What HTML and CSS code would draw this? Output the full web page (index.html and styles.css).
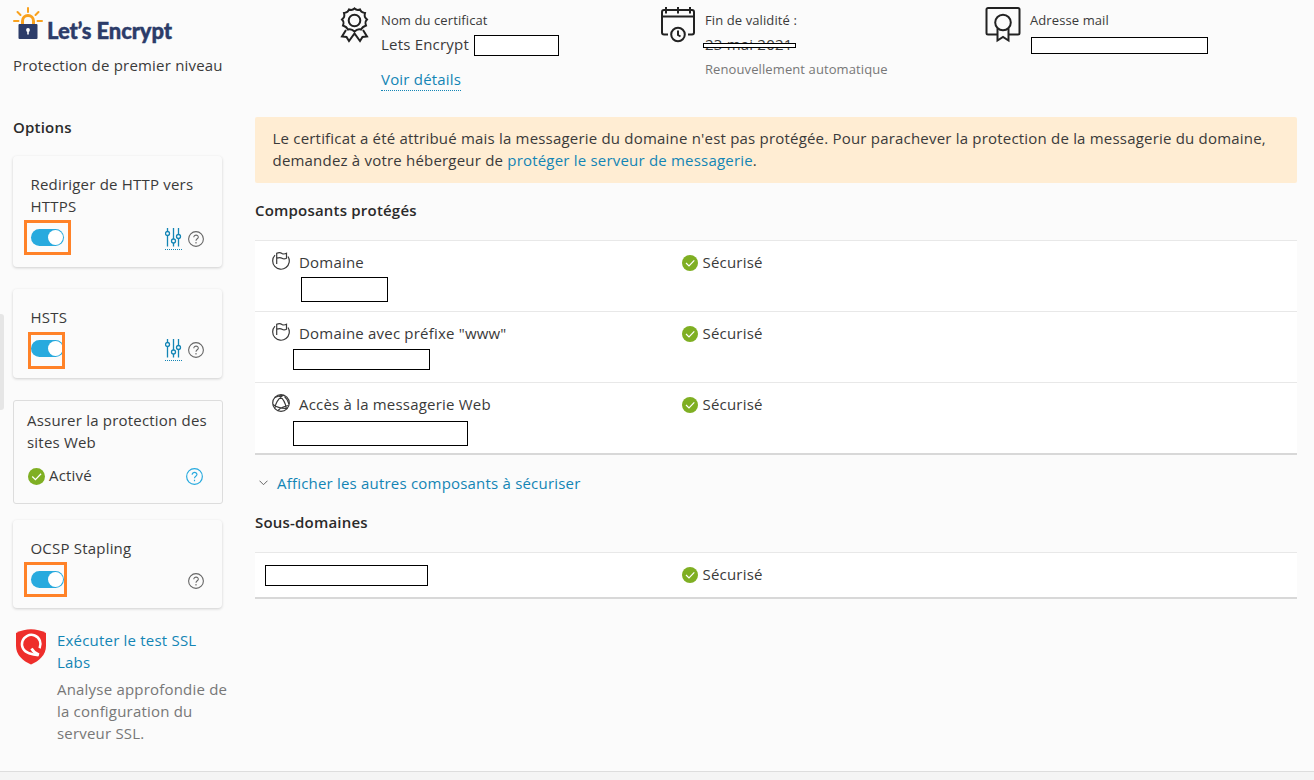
FILE: index.html
```
<!DOCTYPE html>
<html lang="fr">
<head>
<meta charset="utf-8">
<title>Certificat SSL/TLS</title>
<link rel="stylesheet" href="styles.css">
</head>
<body>
<svg class="defs" aria-hidden="true">
  <symbol id="check" viewBox="0 0 16 16"><circle cx="8" cy="8" r="8" fill="#7faf23"/><path d="M4 8l3 3 5.3-5.6" fill="none" stroke="#fff" stroke-width="1.2"/></symbol>
  <symbol id="help" viewBox="0 0 16 16"><circle cx="8" cy="8" r="7.4" fill="none" stroke="currentColor" stroke-width="1.1"/><path d="M5.8 6.3C5.8 3.3 10.4 3.5 10.3 6.2C10.3 7.8 8 7.8 8 9.7M8 11.1v1.3" fill="none" stroke="currentColor" stroke-width="1.1"/></symbol>
  <symbol id="sliders" viewBox="0 0 17 20"><path d="M2.500 0v3.500M2.500 7.500v11M8.500 0v11M8.500 15v3.500M13.500 0v6.500M13.500 10.500v8" stroke="currentColor" stroke-width="1.300"/><g fill="none" stroke="currentColor" stroke-width="1.300"><circle cx="2.500" cy="5.500" r="2"/><circle cx="8.500" cy="13" r="2"/><circle cx="13.500" cy="8.500" r="2"/></g></symbol>
  <symbol id="flag" viewBox="0 0 18 18"><path d="M3 3.200A8.300 8.300 0 1 0 16 4.500M4.700 12V1.200C7 .3 8.700 .5 10 1.500C11.500 2.500 13 2 14.500 1.300V6.200C13 7 11.500 7.200 10 6.200C8.500 5.200 7 5.300 4.700 6.200" fill="none" stroke="currentColor" stroke-width="1.200"/></symbol>
  <symbol id="web" viewBox="0 0 18 18"><g fill="none" stroke="currentColor" stroke-width="1.200"><circle cx="9" cy="9" r="8.300"/><path d="M2.800 3.500Q7 1.300 12 1.300M7 2Q13 5.500 14.500 15M10.500 1.800Q4 6.500 2.800 14.300M1 10.500Q7 15 15.500 14.300M12.500 2.500Q15.500 5 17 10M16.500 11.500Q10 12.500 6 16.500"/></g></symbol>
</svg>

<div class="handle"></div>
<div class="page">
  <header class="top">
    <div class="brand">
      <svg class="logo" width="162" height="40" viewBox="0 0 162 40">
        <path d="M9.500 18v-3a5.500 5.500 0 0 1 11 0v3" fill="none" stroke="#f9a11d" stroke-width="3"/>
        <path d="M15 2v4M4.500 6l3 3M25.500 6L22.500 9M1 15h4.500M24.500 15h4.500" stroke="#f9a11d" stroke-width="2" stroke-linecap="round"/>
        <rect x="5.500" y="18" width="19" height="15" rx="1" fill="#2c3c69"/>
        <circle cx="15" cy="24" r="1.900" fill="#fff"/><path d="M14.200 24h1.600v4.500h-1.600z" fill="#fff"/>
        <text x="34" y="33" textLength="125" class="logo-text">Let’s Encrypt</text>
      </svg>
      <div class="tagline">Protection de premier niveau</div>
    </div>
    <section class="fact fact-name">
      <svg width="30" height="36" viewBox="0 0 30 36" fill="none" stroke="#222" stroke-width="2"><path d="M14.500 1.500C16.500 3.500 17.500 3.500 20 2.500C21 5.500 22.500 5.500 25 6C24 9.500 25 10.500 27 12.500C25 14.500 25 15.500 26 18.500C23 19.500 22 20.500 21 22.500C18.500 21.500 16.500 22.500 14.500 24.500C12.500 22.500 10.500 21.500 8 22.500C7 20.500 6 19.500 3 18.500C4 15.500 4 14.500 2 12.500C4 10.500 5 9.500 4 6C6.500 5.500 8 5.500 9 2.500C11.500 3.500 12.500 3.500 14.500 1.500Z"/><circle cx="14.500" cy="13.500" r="5.800"/><path d="M6 23L2 29.500L6.500 30L9 34L14.500 26.500L20 34L22.500 30L27 29.500L23 23"/></svg>
      <div class="fact-body">
        <div class="label">Nom du certificat</div>
        <div class="value">Lets Encrypt <span class="redact r-name"></span></div>
        <a class="details">Voir détails</a>
      </div>
    </section>
    <section class="fact fact-date">
      <svg width="36" height="36" viewBox="0 0 36 36" fill="none" stroke="#222" stroke-width="2"><path d="M8 27.500H4a2 2 0 0 1-2-2V5a2 2 0 0 1 2-2H32a2 2 0 0 1 2 2V25.500a2 2 0 0 1-2 2H28M2 9.500H34M6 0V6.500M18 0V6.500M30 0V6.500"/><circle cx="18" cy="27.500" r="6.800"/><path d="M18 23.500V28L20.500 29.500"/></svg>
      <div class="fact-body">
        <div class="label">Fin de validité :</div>
        <div class="value date">23 mai 2021<span class="redact r-date"></span></div>
        <div class="note">Renouvellement automatique</div>
      </div>
    </section>
    <section class="fact fact-mail">
      <svg width="36" height="36" viewBox="0 0 36 36" fill="none" stroke="#222" stroke-width="2"><path d="M12 27.500H3a1.500 1.500 0 0 1-1.500-1.500V2.500A1.500 1.500 0 0 1 3 1H33a1.500 1.500 0 0 1 1.500 1.500V26A1.500 1.500 0 0 1 33 27.500H24"/><circle cx="18" cy="15.500" r="7.800"/><path d="M12.500 21.500V33.500L18 30L23.500 33.500V21.500"/></svg>
      <div class="fact-body">
        <div class="label">Adresse mail</div>
        <div class="redact r-mail"></div>
      </div>
    </section>
  </header>

  <div class="columns">
    <aside class="side">
      <h2>Options</h2>
      <div class="card c1">
        <div>Rediriger de HTTP vers HTTPS</div>
        <div class="controls"><span class="toggle"><i class="mark m1"></i></span><span class="tools"><a class="tune"><svg width="17" height="20"><use href="#sliders"/></svg></a><svg class="help" width="16" height="16"><use href="#help"/></svg></span></div>
      </div>
      <div class="card c2">
        <div>HSTS</div>
        <div class="controls"><span class="toggle"><i class="mark m2"></i></span><span class="tools"><a class="tune"><svg width="17" height="20"><use href="#sliders"/></svg></a><svg class="help" width="16" height="16"><use href="#help"/></svg></span></div>
      </div>
      <div class="card outlined">
        <div>Assurer la protection des sites Web</div>
        <div class="active"><svg class="ok" width="17" height="17"><use href="#check"/></svg><span>Activé</span><svg class="help-blue" width="17" height="17"><use href="#help"/></svg></div>
      </div>
      <div class="card c4">
        <div>OCSP Stapling</div>
        <div class="controls"><span class="toggle"><i class="mark m4"></i></span><span class="tools"><svg class="help" width="16" height="16"><use href="#help"/></svg></span></div>
      </div>
      <div class="ssl">
        <svg width="30" height="36" viewBox="0 0 30 36"><path d="M0 4Q15-3.500 30 4V17C30 26 23 32 15 35.500C7 32 0 26 0 17Z" fill="#ee2e2b"/><path d="M23.600 19.200A9.300 9.300 0 1 0 13 24.200Q17.500 25.800 22.500 26.300" fill="none" stroke="#fff" stroke-width="2.500"/><path d="M15.500 19.500Q18 24 23 25.800" fill="none" stroke="#fff" stroke-width="2.600"/></svg>
        <div>
          <a class="link">Exécuter le test SSL Labs</a>
          <p>Analyse approfondie de la configuration du serveur SSL.</p>
        </div>
      </div>
    </aside>
    <main class="main">
      <div class="alert">Le certificat a été attribué mais la messagerie du domaine n'est pas protégée. Pour parachever la protection de la messagerie du domaine, demandez à votre hébergeur de <a>protéger le serveur de messagerie</a>.</div>
      <h2>Composants protégés</h2>
      <div class="list">
        <div class="row"><svg width="18" height="18"><use href="#flag"/></svg><div class="name">Domaine<span class="redact r-dom"></span></div><div class="status"><svg width="16" height="16"><use href="#check"/></svg>Sécurisé</div></div>
        <div class="row"><svg width="18" height="18"><use href="#flag"/></svg><div class="name">Domaine avec préfixe "www"<span class="redact r-www"></span></div><div class="status"><svg width="16" height="16"><use href="#check"/></svg>Sécurisé</div></div>
        <div class="row"><svg width="18" height="18"><use href="#web"/></svg><div class="name">Accès à la messagerie Web<span class="redact r-web"></span></div><div class="status"><svg width="16" height="16"><use href="#check"/></svg>Sécurisé</div></div>
      </div>
      <div class="more"><svg width="9" height="6" viewBox="0 0 9 6"><path d="M.5.7l4 4 4-4" fill="none" stroke="#666"/></svg><a>Afficher les autres composants à sécuriser</a></div>
      <h2 class="sub-title">Sous-domaines</h2>
      <div class="list short">
        <div class="row"><span class="redact r-sub"></span><div class="status"><svg width="16" height="16"><use href="#check"/></svg>Sécurisé</div></div>
      </div>
    </main>
  </div>
  <footer class="bottom"></footer>
</div>
</body>
</html>
```

FILE: styles.css
```
* { box-sizing: border-box; }
body { margin: 0; background: #fbfbfb; color: #3a3a3a; font: 15px/22px "Open Sans", "Noto Sans", sans-serif; letter-spacing: .2px; }
svg { display: block; flex: none; }
h2 { margin: 0; font-size: 15px; line-height: 22px; font-weight: 600; color: #2a2a2a; }
a { color: #1385b5; }
.defs { position: absolute; width: 0; height: 0; }
.page { height: 780px; display: flex; flex-direction: column; overflow: hidden; }
.handle { position: absolute; left: 0; top: 314px; width: 4px; height: 96px; background: #e6e6e6; border-radius: 0 3px 3px 0; }

.top { display: grid; grid-template-columns: 327px 320px 325px 1fr; height: 116px; padding-left: 13px; flex: none; }
.logo { margin-top: 6px; }
.logo-text { font: 900 22px Lato, sans-serif; letter-spacing: 0; fill: #2c3c69; stroke: #2c3c69; stroke-width: .4px; }
.tagline { margin-top: 8px; white-space: nowrap; }
.fact { display: flex; padding-top: 7px; }
.fact-name { gap: 11px; }
.fact-date { gap: 9px; }
.fact-mail { gap: 9px; }
.fact-body { padding-top: 2px; }
.label { font-size: 13px; letter-spacing: .1px; }
.value { display: flex; align-items: center; margin-top: 2px; height: 22px; white-space: pre; }
.details { display: inline-block; margin-top: 13px; border-bottom: 1px dotted; line-height: 22px; }
.note { font-size: 13px; letter-spacing: .1px; color: #777; margin-top: 3px; }
.date { position: relative; }
.redact { display: block; flex: none; background: #fff; border: 1px solid #000; }
.r-name { width: 85px; height: 21px; margin: 2px 0 0 1px; }
.r-date { position: absolute; left: -2px; top: 10px; width: 93px; height: 5px; }
.r-mail { width: 177px; height: 17px; margin: 6px 0 0 1px; }

.columns { display: flex; flex: 1; padding-left: 13px; }
.side { width: 210px; margin-right: 32px; }
.card { width: 209px; padding: 17px 17px 0 17.5px; border-radius: 4px; box-shadow: 0 1px 3px rgba(0,0,0,.18); }
.c1 { margin-top: 18px; height: 111px; }
.c2 { margin-top: 22px; height: 89px; }
.outlined { width: 210px; margin-top: 22px; height: 104px; border: 1px solid #ddd; box-shadow: none; padding: 8px 13px; border-radius: 3px; }
.c4 { margin-top: 16px; height: 88px; }
.controls { display: flex; justify-content: space-between; height: 17px; margin: 12px 0 0 .5px; }
.toggle { position: relative; width: 33px; height: 17px; border-radius: 9px; background: #28aade; }
.toggle::after { content: ""; position: absolute; right: 1px; top: 1px; width: 15px; height: 15px; border-radius: 50%; background: #fff; }
.mark { position: absolute; z-index: 1; border: 3px solid #ff8228; }
.m1 { left: -7px; top: -9px; width: 47px; height: 35px; }
.m2 { left: -3px; top: -8px; width: 37px; height: 37px; }
.m4 { left: -7px; top: -9px; width: 43px; height: 35px; }
.tools { display: flex; gap: 6px; }
.tune { height: 22px; margin-top: -1px; border-bottom: 1px dotted; }
.help { color: #666; margin: 2px 1px 0 0; }
.active { display: flex; align-items: center; margin-top: 11px; gap: 4px; }
.ok { margin: 2px 0 0 1px; }
.help-blue { color: #28aade; margin: 2px 6px 0 auto; }
.ssl { display: flex; gap: 11px; width: 220px; margin: 21px 0 0 3px; }
.ssl .link { display: block; width: 150px; }
.ssl p { margin: 5px 0 0; width: 176px; color: #777; }

.main { width: 1042px; }
.alert { height: 66px; padding: 10px 17.5px; background: #ffedd3; border-radius: 2px; margin: 1px 0 16px; }
.list { margin-top: 19px; background: #fff; border-bottom: 2px solid #d8d8d8; }
.row { display: flex; height: 71px; padding: 10px 17px 0; border-top: 1px solid #e8e8e8; }
.row > svg { margin-top: 1px; }
.name { width: 383px; margin-left: 9px; }
.status { display: flex; align-items: center; gap: 4.5px; height: 22px; }
.status svg { margin-top: 2px; }
.r-dom { width: 87px; height: 25px; margin: 4px 0 0 2px; }
.r-www { width: 137px; height: 21px; margin: 5px 0 0 -6px; }
.r-web { width: 175px; height: 25px; margin: 6px 0 0 -6px; }
.more { display: flex; align-items: center; gap: 9px; margin: 17px 0 0 4px; }
.sub-title { margin-top: 17px; }
.short .row { height: 45px; padding-left: 10px; }
.r-sub { width: 163px; height: 21px; margin: 2px 254px 0 0; }
.bottom { height: 9px; flex: none; background: #f4f4f4; border-top: 1px solid #ddd; }
```
